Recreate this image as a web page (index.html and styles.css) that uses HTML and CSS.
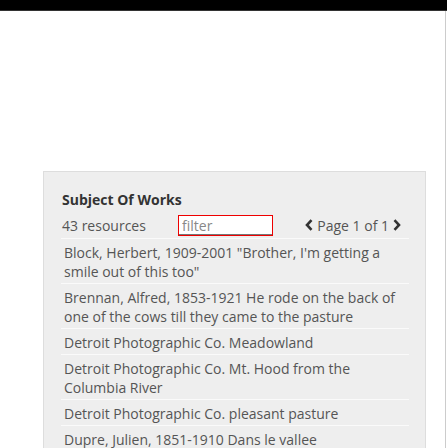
FILE: index.html
```html
<!DOCTYPE html>
<html>
<head>
<meta charset="utf-8">
<link rel="stylesheet" href="styles.css">
</head>
<body>
<div class="frame">
  <div class="topbar"></div>
  <div class="content">
    <div class="panel">
      <div class="title">Subject Of Works</div>
      <div class="toolbar">
        <span class="count">43 resources</span>
        <input class="filter" type="text" placeholder="filter">
        <span class="pager">
          <svg class="chev" width="8" height="12" viewBox="0 0 8 12"><path d="M6.5 1.2 L2 6 L6.5 10.8" fill="none" stroke="#333" stroke-width="2.6"/></svg>
          <span class="pagetext">Page 1 of 1</span>
          <svg class="chev" width="8" height="12" viewBox="0 0 8 12"><path d="M1.5 1.2 L6 6 L1.5 10.8" fill="none" stroke="#333" stroke-width="2.6"/></svg>
        </span>
      </div>
      <ul class="list">
        <li>Block, Herbert, 1909-2001 "Brother, I'm getting a smile out of this too"</li>
        <li>Brennan, Alfred, 1853-1921 He rode on the back of one of the cows till they came to the pasture</li>
        <li>Detroit Photographic Co. Meadowland</li>
        <li>Detroit Photographic Co. Mt. Hood from the Columbia River</li>
        <li>Detroit Photographic Co. pleasant pasture</li>
        <li>Dupre, Julien, 1851-1910 Dans le vallee</li>
      </ul>
    </div>
  </div>
</div>
</body>
</html>
```
FILE: styles.css
```css
html, body {
  margin: 0;
  padding: 0;
  background: #fff;
  overflow: hidden;
}
.frame {
  width: 447px;
  height: 448px;
  overflow: hidden;
  font-family: "Open Sans", "Liberation Sans", sans-serif;
}
.topbar {
  height: 10px;
  background: #000;
  border-bottom: 1px solid #333;
}
.content {
  width: 446px;
  height: 437px;
  border-right: 1px solid #ccc;
  padding-top: 160px;
  box-sizing: border-box;
  overflow: hidden;
}
.panel {
  margin-left: 43px;
  width: 383px;
  height: 277px;
  box-sizing: border-box;
  background: #eee;
  border: 1px solid #ddd;
  border-bottom: none;
  padding: 18px 16px 0 17px;
  overflow: hidden;
}
.title {
  font-size: 14px;
  font-weight: bold;
  color: #333;
  line-height: 19px;
  padding-left: 1px;
}
.toolbar {
  display: flex;
  align-items: center;
  height: 26px;
  margin-top: 3px;
  padding-left: 1px;
}
.count {
  font-size: 14px;
  color: #555;
  line-height: 19px;
  width: 116px;
}
.filter {
  width: 95px;
  height: 21px;
  box-sizing: border-box;
  border: 1px solid #e00;
  box-shadow: inset 0 -1px 0 #777;
  background: #fff;
  padding: 0 3px;
  margin: 0;
  font-family: "Open Sans", "Liberation Sans", sans-serif;
  font-size: 14px;
  outline: none;
}
.filter::placeholder {
  color: #888;
}
.pager {
  margin-left: auto;
  margin-right: 8px;
  display: flex;
  align-items: center;
  gap: 4px;
  font-size: 14px;
  color: #555;
  line-height: 19px;
}
.chev {
  display: block;
}
.list {
  list-style: none;
  margin: 0;
  padding: 0;
}
.list li {
  border-top: 1px solid #fafafa;
  padding: 4px 3px 2px;
  font-size: 14px;
  line-height: 19px;
  color: #555;
}
```
